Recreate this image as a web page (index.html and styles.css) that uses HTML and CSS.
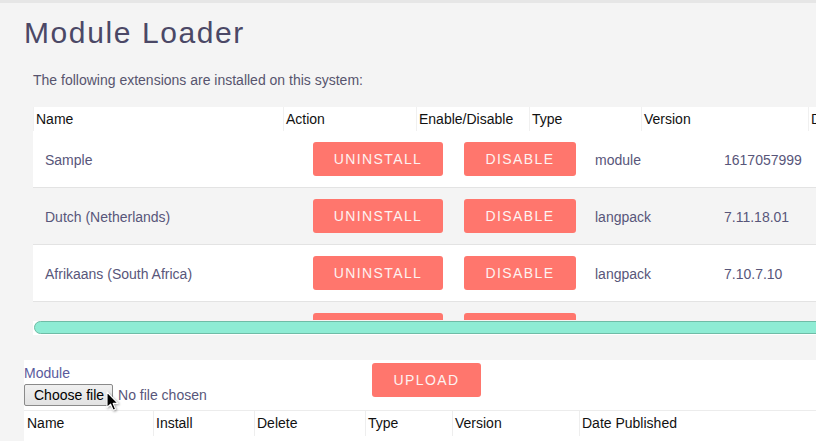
FILE: index.html
```html
<!DOCTYPE html>
<html lang="en">
<head>
<meta charset="utf-8">
<title>Module Loader</title>
<link rel="stylesheet" href="styles.css">
</head>
<body>
<div class="topbar"></div>
<main class="page">
  <h1 class="title">Module Loader</h1>
  <p class="intro">The following extensions are installed on this system:</p>

  <div class="ext">
    <div class="viewport">
      <div class="ext-head">
        <div class="hcell">Name</div>
        <div class="hcell">Action</div>
        <div class="hcell">Enable/Disable</div>
        <div class="hcell">Type</div>
        <div class="hcell">Version</div>
        <div class="hcell">Date Published</div>
      </div>
      <div class="ext-row">
        <div class="cell">Sample</div>
        <div class="cell"><button class="btn btn-uninstall">UNINSTALL</button></div>
        <div class="cell"><button class="btn btn-disable">DISABLE</button></div>
        <div class="cell">module</div>
        <div class="cell">1617057999</div>
      </div>
      <div class="ext-row alt">
        <div class="cell">Dutch (Netherlands)</div>
        <div class="cell"><button class="btn btn-uninstall">UNINSTALL</button></div>
        <div class="cell"><button class="btn btn-disable">DISABLE</button></div>
        <div class="cell">langpack</div>
        <div class="cell">7.11.18.01</div>
      </div>
      <div class="ext-row">
        <div class="cell">Afrikaans (South Africa)</div>
        <div class="cell"><button class="btn btn-uninstall">UNINSTALL</button></div>
        <div class="cell"><button class="btn btn-disable">DISABLE</button></div>
        <div class="cell">langpack</div>
        <div class="cell">7.10.7.10</div>
      </div>
      <div class="ext-row alt">
        <div class="cell"></div>
        <div class="cell"><button class="btn btn-uninstall" aria-label="Uninstall"></button></div>
        <div class="cell"><button class="btn btn-disable" aria-label="Disable"></button></div>
        <div class="cell"></div>
        <div class="cell"></div>
      </div>
    </div>
    <div class="track"><div class="thumb"></div></div>
  </div>

  <section class="upload">
    <form class="upload-form">
      <div class="field">
        <div class="field-label">Module</div>
        <div class="file-wrap">
          <input class="file-input" id="module" type="file">
          <label class="file-btn" for="module">Choose file</label>
          <span class="file-name">No file chosen</span>
          <svg class="cursor" width="14" height="22" viewBox="0 0 14 22" aria-hidden="true">
            <path d="M1 1 L1 16.5 L4.6 13.2 L7.2 19.2 L9.6 18.2 L7.1 12.4 L12 12.4 Z" fill="#000" stroke="#fff" stroke-width="1.1" stroke-linejoin="round"/>
          </svg>
        </div>
      </div>
      <button type="button" class="btn btn-upload">UPLOAD</button>
    </form>
    <div class="up-head">
      <div class="uhcell">Name</div>
      <div class="uhcell">Install</div>
      <div class="uhcell">Delete</div>
      <div class="uhcell">Type</div>
      <div class="uhcell">Version</div>
      <div class="uhcell">Date Published</div>
    </div>
  </section>
</main>
</body>
</html>
```
FILE: styles.css
```css
html, body {
  margin: 0;
  padding: 0;
  background: #f4f4f4;
  overflow: hidden;
  font-family: "Liberation Sans", Arial, sans-serif;
  font-size: 14px;
}

.topbar {
  height: 3px;
  background: #e6e6e6;
}

.page {
  padding-left: 24px;
}

.title {
  margin: 12px 0 0 0;
  font-size: 30px;
  line-height: 36px;
  font-weight: normal;
  letter-spacing: 1.6px;
  color: #4b4866;
}

.intro {
  margin: 19px 0 0 9px;
  line-height: 20px;
  color: #57546e;
}

.ext {
  margin: 17px 0 0 9px;
  width: 900px;
}

.viewport {
  height: 213px;
  overflow: hidden;
}

.ext-head {
  display: grid;
  grid-template-columns: 249px 132px 112px 111px 166px 1fr;
  column-gap: 1px;
  padding-left: 1px;
  background: #f0f0f0;
}

.hcell {
  background: #fff;
  height: 24px;
  line-height: 24px;
  padding-left: 2px;
  color: #111;
  white-space: nowrap;
}

.ext-row {
  display: grid;
  grid-template-columns: 268px 151px 131px 129px 150px 1fr;
  align-items: center;
  height: 56px;
  background: #fff;
  border-bottom: 1px solid #e3e3e3;
  color: #58567a;
}

.ext-row.alt {
  background: #f4f4f4;
}

.cell {
  padding-left: 12px;
  padding-top: 2px;
  white-space: nowrap;
}

.ext-row .cell:nth-child(2),
.ext-row .cell:nth-child(3) {
  padding-top: 0;
}

.btn {
  display: block;
  height: 34px;
  border: none;
  border-radius: 3px;
  background: #ff766d;
  color: #fdf2f1;
  font-family: "Liberation Sans", Arial, sans-serif;
  font-size: 14px;
  letter-spacing: 1.4px;
  padding: 0;
  cursor: pointer;
}

.btn-uninstall { width: 130px; }
.btn-disable { width: 112px; }
.btn-upload { width: 109px; margin-top: 3px; }

.track {
  height: 14px;
  background: #fff;
}

.thumb {
  box-sizing: border-box;
  height: 13px;
  margin: 1px 0 0 1px;
  border: 1px solid #6fbca6;
  border-radius: 7px;
  background: #8eecd4;
}

.upload {
  margin-top: 25px;
  background: #fff;
  padding-bottom: 20px;
}

.upload-form {
  display: flex;
  align-items: flex-start;
  margin: 0;
}

.field {
  width: 348px;
  padding-top: 5px;
}

.field-label {
  line-height: 16px;
  color: #5a5a9c;
}

.file-wrap {
  position: relative;
  margin-top: 3px;
  height: 22px;
  display: flex;
  align-items: center;
}

.file-input {
  display: none;
}

.file-btn {
  box-sizing: border-box;
  height: 22px;
  line-height: 20px;
  padding: 0 8px 0 9px;
  margin-right: 5px;
  color: #000;
  background: linear-gradient(#f0f0f0, #e2e2e2);
  border: 1px solid #8a8a8a;
  border-radius: 2px;
  white-space: nowrap;
  cursor: default;
}

.file-name {
  color: #58567a;
  white-space: nowrap;
}

.cursor {
  position: absolute;
  left: 82px;
  top: 7px;
  filter: drop-shadow(1px 1px 1px rgba(0,0,0,0.35));
}

.up-head {
  display: flex;
  margin-top: 4px;
  border-top: 1px solid #ececec;
  height: 25px;
}

.uhcell {
  line-height: 24px;
  color: #111;
  padding-left: 2px;
  border-left: 1px solid #eeeeee;
  white-space: nowrap;
}

.uhcell:nth-child(1) { width: 126px; border-left: none; padding-left: 3px; }
.uhcell:nth-child(2) { width: 98px; }
.uhcell:nth-child(3) { width: 108px; }
.uhcell:nth-child(4) { width: 84px; }
.uhcell:nth-child(5) { width: 124px; }
.uhcell:nth-child(6) { width: 199px; }
```
